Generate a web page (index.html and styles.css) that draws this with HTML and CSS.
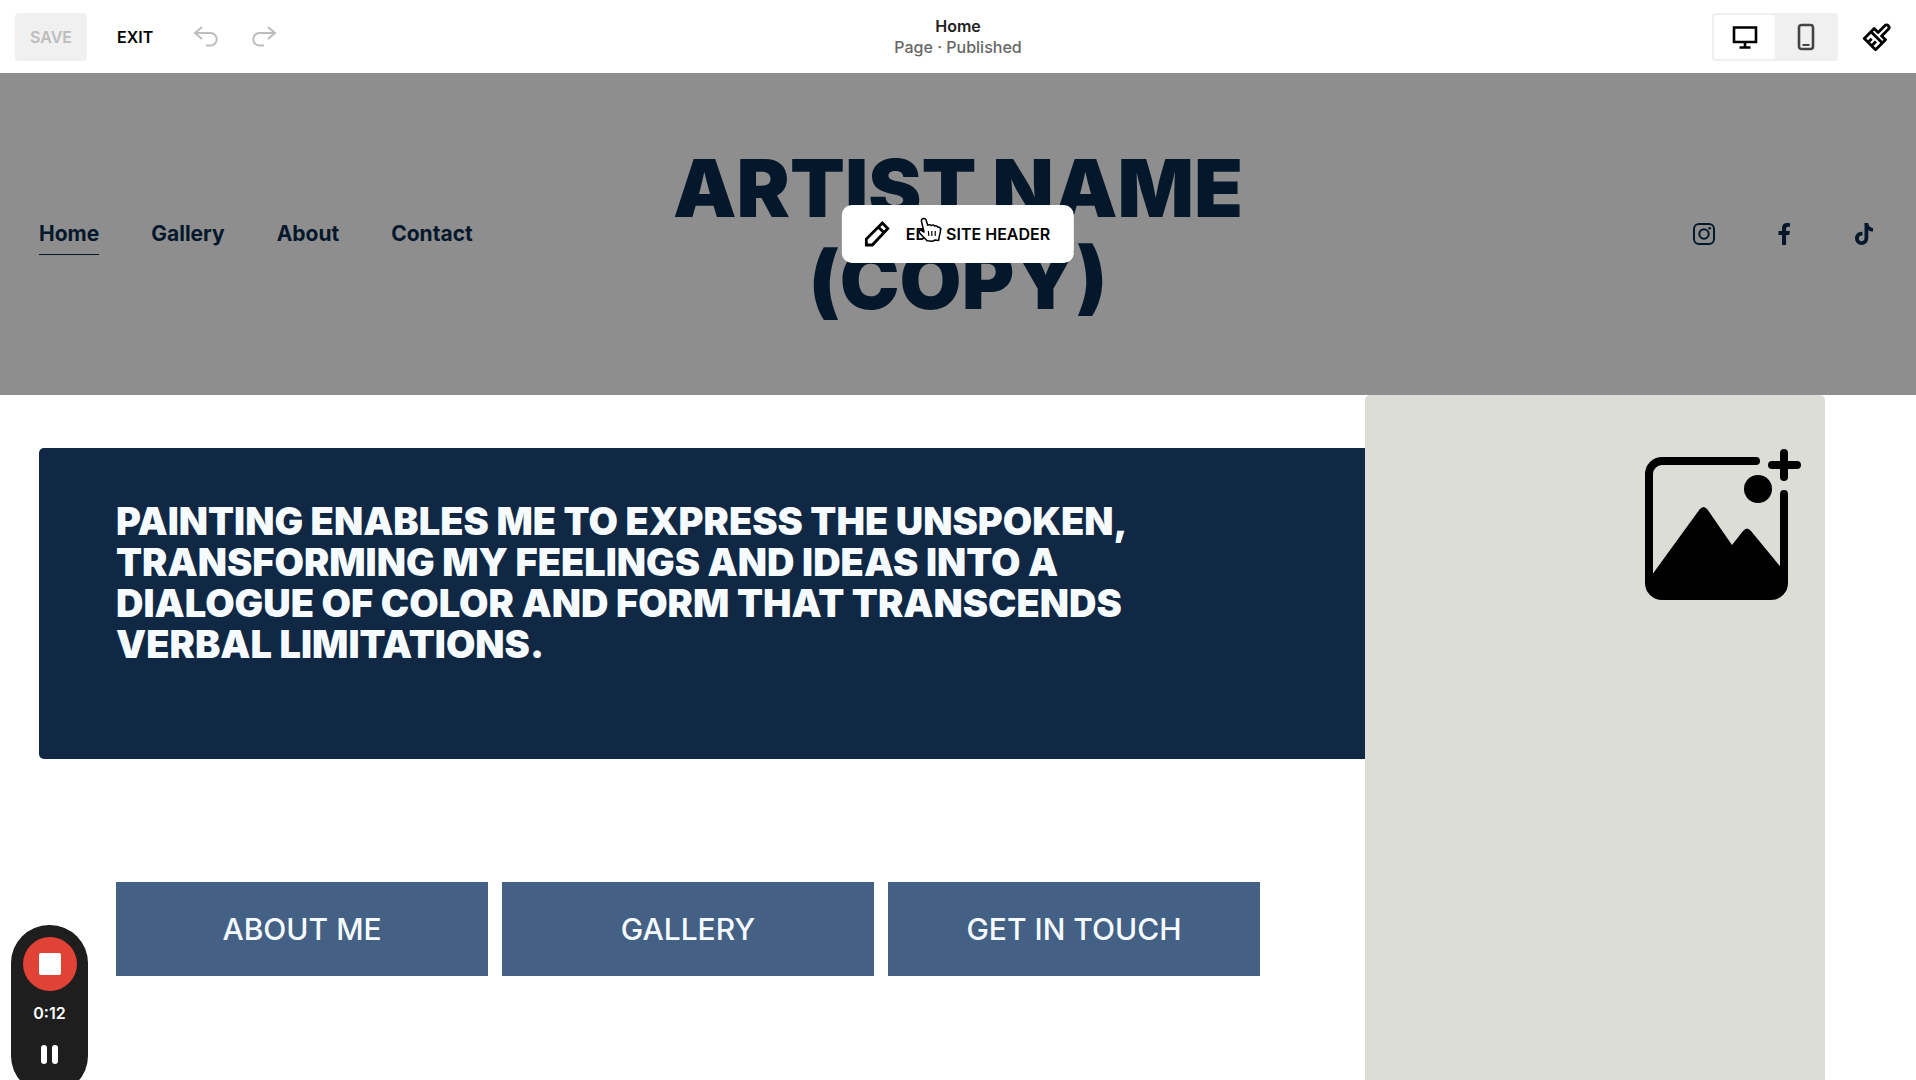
FILE: index.html
```html
<!DOCTYPE html>
<html lang="en">
<head>
  <meta charset="UTF-8">
  <meta name="viewport" content="width=device-width, initial-scale=1.0">
  <title>Home - Site Editor</title>
  <link rel="stylesheet" href="styles.css">
</head>
<body>

  <div class="toolbar">
    <div class="toolbar-left">
      <button class="save-btn" type="button" disabled>SAVE</button>
      <button class="exit-btn" type="button">EXIT</button>
      <button class="history-btn" type="button" aria-label="Undo">
        <svg width="26" height="22" viewBox="0 0 26 22"><path d="M9 1 2 7l7 6M2 7h15.500a6 6 0 0 1 0 12.500H13"/></svg>
      </button>
      <button class="history-btn" type="button" aria-label="Redo">
        <svg width="26" height="22" viewBox="0 0 26 22"><path d="M17 1l7 6-7 6M24 7H8.500a6 6 0 0 0 0 12.500H13"/></svg>
      </button>
    </div>

    <div class="page-info">
      <div class="page-name">Home</div>
      <div class="page-status">Page · Published</div>
    </div>

    <div class="toolbar-right">
      <div class="device-toggle">
        <button class="device-btn active" type="button" aria-label="Desktop view">
          <svg width="26" height="26" viewBox="0 0 26 26"><path d="M2 3.500h22v14.500H2zM13 18v5M7.500 23.500h11" fill="none" stroke="#000" stroke-width="2.600"/></svg>
        </button>
        <button class="device-btn" type="button" aria-label="Mobile view">
          <svg width="18" height="28" viewBox="0 0 18 28"><rect x="2" y="2" width="14" height="24" rx="2.500" fill="none" stroke="#444" stroke-width="2.600"/><path d="M5.500 22h7" stroke="#444" stroke-width="2"/></svg>
        </button>
      </div>
      <button class="style-btn" type="button" aria-label="Site styles">
        <svg width="30" height="30" viewBox="0 0 30 30">
          <g fill="none" stroke="#000" stroke-width="2.800" stroke-linejoin="round" transform="rotate(45 15 15)">
            <path d="M12.500 11V1.500a2.500 2.500 0 0 1 5 0V11H23v14H7V11zM7 15.500h16M12.500 25v-5M17.500 25v-6"/>
          </g>
        </svg>
      </button>
    </div>
  </div>

  <header class="site-header">
    <nav class="site-nav">
      <a class="active" href="#home">Home</a>
      <a href="#gallery">Gallery</a>
      <a href="#about">About</a>
      <a href="#contact">Contact</a>
    </nav>

    <h1 class="site-title">ARTIST NAME (COPY)</h1>

    <div class="social">
      <a href="#instagram" aria-label="Instagram">
        <svg width="26" height="26" viewBox="0 0 26 26"><rect x="3" y="3" width="20" height="20" rx="5" fill="none" stroke="#05182b" stroke-width="2"/><circle cx="13" cy="13" r="4.700" fill="none" stroke="#05182b" stroke-width="2"/><circle cx="18.700" cy="7.300" r="1.400" fill="#05182b"/></svg>
      </a>
      <a href="#facebook" aria-label="Facebook">
        <svg width="26" height="26" viewBox="0 0 26 26"><path d="M11 24V14H7.500v-4H11V7.300C11 3.800 13 2 16.200 2c1.300 0 2.300.1 2.800.2v3.500h-2c-1.500 0-1.900.8-1.900 1.900V10h3.800l-.6 4h-3.200v10z" fill="#05182b"/></svg>
      </a>
      <a href="#tiktok" aria-label="TikTok">
        <svg width="26" height="26" viewBox="0 0 26 26"><path d="M13.500 2h3.700c.3 2.800 2 4.600 4.800 4.900v3.700c-1.800 0-3.300-.5-4.700-1.500v7.700c0 4.400-3.100 7.200-6.800 7.200A6.600 6.600 0 0 1 4 17.400c0-4 3.300-7 7.500-6.600v3.900c-2-.5-3.700.8-3.700 2.700 0 1.700 1.300 2.900 2.800 2.900 1.800 0 2.900-1.200 2.900-3.200z" fill="#05182b"/></svg>
      </a>
    </div>

    <button class="edit-header-btn" type="button">
      <svg width="26" height="26" viewBox="0 0 26 26"><path d="M2.500 24v-6L18.500 2l5.500 5.500L8.500 24zM14.500 6l5.500 5.500" fill="none" stroke="#000" stroke-width="2.800"/></svg>
      EDIT SITE HEADER
      <svg class="cursor" width="26" height="26" viewBox="0 0 26 26"><path d="M6.500 1.500c1.200-.3 2.300.4 2.700 1.600l1.700 5.200c1-1 2.900-.8 3.500.4 1-1 2.900-.8 3.500.5 1-.8 2.700-.3 3.100 1 1.200-.5 2.400.2 2.600 1.500.4 3-.2 5.300-1.200 7.800l-.6 4-3.600-.6-2 1.300-6-.4C7.700 20.500 5 19 2.600 15.800c-1-1.600.6-3 2.200-2.300l2.400 1.500L4.600 4.200c-.3-1.200.6-2.400 1.900-2.700z" fill="#fff" stroke="#000" stroke-width="1.500" stroke-linejoin="round"/><path d="M11.500 14l.5 5M15 14v5M18.500 14l-.2 5" fill="none" stroke="#000" stroke-width="1.200"/></svg>
    </button>
  </header>

  <main class="hero">
    <div class="hero-content">
      <section class="quote">
        <h2>PAINTING ENABLES ME TO EXPRESS THE UNSPOKEN, TRANSFORMING MY FEELINGS AND IDEAS INTO A DIALOGUE OF COLOR AND FORM THAT TRANSCENDS VERBAL LIMITATIONS.</h2>
      </section>
      <div class="hero-links">
        <a href="#about">ABOUT ME</a>
        <a href="#gallery">GALLERY</a>
        <a href="#contact">GET IN TOUCH</a>
      </div>
    </div>

    <div class="image-block">
      <svg width="160" height="154" viewBox="0 0 160 154">
        <g fill="none" stroke="#000" stroke-width="8" stroke-linecap="round">
          <path d="M112 14H18A13 13 0 0 0 5 27v109a13 13 0 0 0 13 13h109a13 13 0 0 0 13-13V47"/>
          <path d="M140 6v24M128 18h25"/>
        </g>
        <circle cx="114" cy="42" r="14"/>
        <path d="M5 132 55.500 62.500q4-5 8 0L88 98l11-14q4-5 8 0l33 40v12a13 13 0 0 1-13 13H18a13 13 0 0 1-13-13z"/>
      </svg>
    </div>
  </main>

  <div class="recorder">
    <button class="stop-btn" type="button" aria-label="Stop recording"><span></span></button>
    <div class="time">0:12</div>
    <button class="pause-btn" type="button" aria-label="Pause recording"><span></span><span></span></button>
  </div>

</body>
</html>
```
FILE: styles.css
```css
* {
  box-sizing: border-box;
}

body {
  margin: 0;
  min-height: 100vh;
  display: flex;
  flex-direction: column;
  background: #fff;
  color: #000;
  font-family: Inter, "Liberation Sans", sans-serif;
  font-size: 16px;
}

button {
  padding: 0;
  border: none;
  background: none;
  font: inherit;
  font-weight: 600;
  cursor: pointer;
}

a {
  color: inherit;
  text-decoration: none;
}

svg {
  display: block;
}

/* editor toolbar */
.toolbar {
  display: flex;
  align-items: center;
  height: 73px;
  padding: 0 15px;
}

.toolbar-left,
.toolbar-right {
  display: flex;
  align-items: center;
  flex: 1;
}

.toolbar-right {
  justify-content: flex-end;
  gap: 24px;
}

.save-btn {
  height: 48px;
  padding: 0 15px;
  border-radius: 4px;
  background: #f0f0f0;
  color: #bdbdbd;
}

.exit-btn {
  margin: 0 16px 0 30px;
}

.history-btn {
  margin-left: 24px;
}

.history-btn + .history-btn {
  margin-left: 32px;
}

.history-btn path {
  fill: none;
  stroke: #bdbdbd;
  stroke-width: 2;
}

.page-info {
  text-align: center;
  line-height: 21px;
}

.page-name {
  color: #222;
  font-weight: 600;
}

.page-status {
  color: #666;
  font-weight: 500;
}

.device-toggle {
  display: flex;
  padding: 2px;
  border-radius: 4px;
  background: #f0f0f0;
}

.device-btn {
  display: flex;
  align-items: center;
  justify-content: center;
  width: 61px;
  height: 44px;
}

.device-btn.active {
  border-radius: 2px;
  background: #fff;
}

.style-btn {
  margin-right: 9px;
}

/* site header, dimmed while hovered */
.site-header {
  position: relative;
  display: flex;
  align-items: center;
  padding: 69px 39px;
  background: #8e8e8e;
  color: #05182b;
}

.site-nav,
.social {
  display: flex;
  flex: 1;
}

.site-nav {
  gap: 52px;
  font-size: 21px;
  font-weight: 700;
}

.site-nav a {
  padding: 8px 0;
  border-bottom: 1px solid transparent;
}

.site-nav .active {
  border-color: #05182b;
}

.social {
  justify-content: flex-end;
  gap: 54px;
}

.site-title {
  width: 620px;
  margin: 0;
  font-size: 80px;
  font-weight: 900;
  line-height: 92px;
  text-align: center;
}

.edit-header-btn {
  position: absolute;
  top: 50%;
  left: 50%;
  display: flex;
  align-items: center;
  gap: 16px;
  height: 58px;
  padding: 0 24px 0 22px;
  border-radius: 10px;
  background: #fff;
  color: #000;
  white-space: nowrap;
  transform: translate(-50%, -50%);
}

.cursor {
  position: absolute;
  top: 12px;
  left: 75px;
}

/* page content */
.hero {
  display: flex;
  flex: 1;
  padding: 0 91px 0 39px;
}

.hero-content {
  flex: 1;
  padding: 53px 0;
}

.quote {
  padding: 53px 77px 94px;
  border-radius: 5px 0 0 5px;
  background: #102844;
}

.quote h2 {
  max-width: 1080px;
  margin: 0;
  color: #f5fbff;
  font-size: 38px;
  font-weight: 900;
  line-height: 41px;
}

.hero-links {
  display: flex;
  gap: 14px;
  margin-top: 123px;
  padding: 0 105px 0 77px;
}

.hero-links a {
  flex: 1;
  padding: 27px 0;
  background: #446084;
  color: #f5fbff;
  font-size: 30px;
  font-weight: 500;
  line-height: 40px;
  text-align: center;
}

.image-block {
  display: flex;
  align-items: flex-start;
  justify-content: flex-end;
  width: 460px;
  padding: 52px 21px;
  border-radius: 5px 5px 0 0;
  background: #dcddd7;
}

/* screen recorder pill */
.recorder {
  position: fixed;
  bottom: -14px;
  left: 11px;
  display: flex;
  flex-direction: column;
  align-items: center;
  width: 77px;
  height: 169px;
  padding-top: 12px;
  border-radius: 38px;
  background: #1e1e1e;
}

.stop-btn {
  display: flex;
  align-items: center;
  justify-content: center;
  width: 54px;
  height: 54px;
  border-radius: 50%;
  background: #e04335;
}

.stop-btn span {
  width: 22px;
  height: 22px;
  border-radius: 2px;
  background: #fff;
}

.time {
  margin: 12px 0 22px;
  color: #fff;
  font-weight: 600;
  line-height: 20px;
}

.pause-btn {
  display: flex;
  gap: 5px;
}

.pause-btn span {
  width: 6px;
  height: 19px;
  border-radius: 3px;
  background: #fff;
}
```
